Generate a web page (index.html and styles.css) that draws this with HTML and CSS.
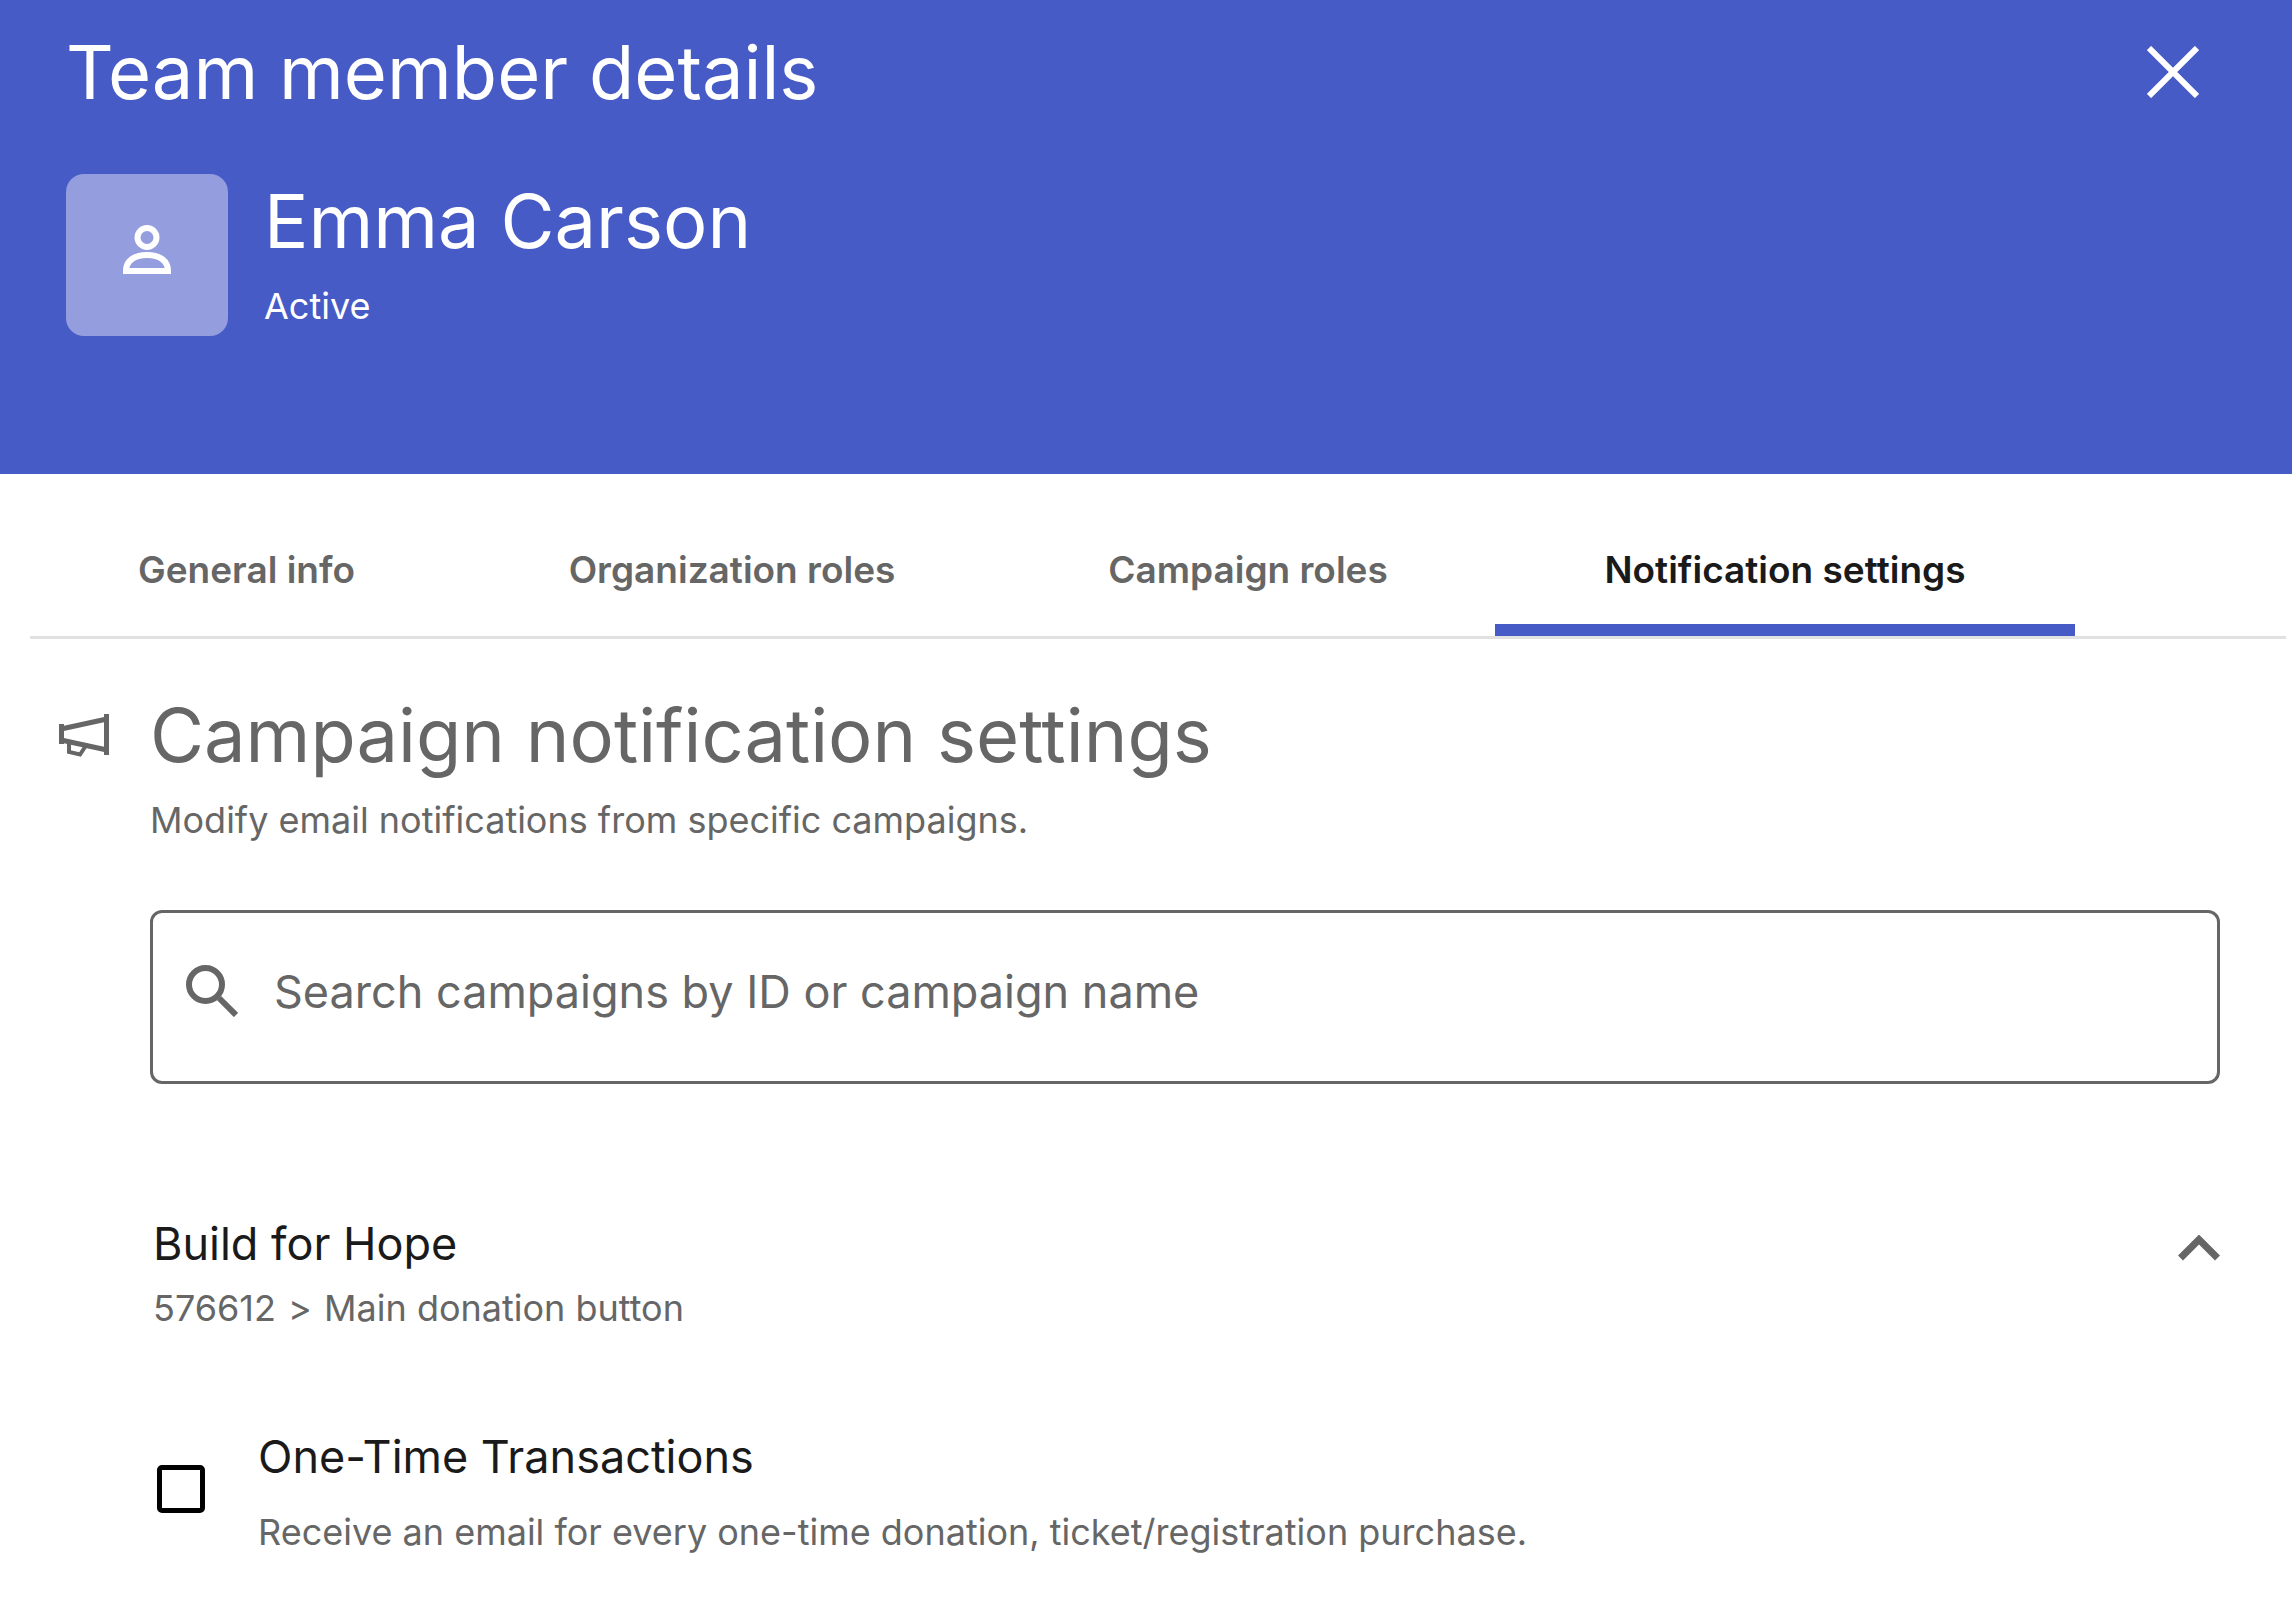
FILE: index.html
```html
<!DOCTYPE html>
<html lang="en">

<head>
  <meta charset="UTF-8">
  <meta name="viewport" content="width=device-width, initial-scale=1.0">
  <title>Team member details</title>
  <link rel="stylesheet" href="styles.css">
</head>

<body>
  <header class="header">
    <div class="header-top">
      <h1 class="title">Team member details</h1>
      <button type="button" class="close" aria-label="Close">
        <svg width="52" height="52" viewBox="0 0 52 52" fill="none" stroke="currentColor" stroke-width="6">
          <path d="M2 2l48 48M50 2L2 50" />
        </svg>
      </button>
    </div>
    <div class="profile">
      <div class="avatar">
        <svg width="48" height="50" viewBox="0 0 48 50" fill="none" stroke="currentColor" stroke-width="6">
          <circle cx="24" cy="12.5" r="9.5" />
          <path d="M3 46c0-10 8-16 21-16s21 6 21 16z" />
        </svg>
      </div>
      <div class="profile-text">
        <h2 class="title">Emma Carson</h2>
        <div class="status">Active</div>
      </div>
    </div>
  </header>

  <nav class="tabs">
    <button type="button" class="tab">General info</button>
    <button type="button" class="tab">Organization roles</button>
    <button type="button" class="tab">Campaign roles</button>
    <button type="button" class="tab active">Notification settings</button>
  </nav>

  <main class="settings">
    <svg class="megaphone" width="50" height="43" viewBox="0 0 50 43" fill="none" stroke="currentColor">
      <path d="M2.5 10v20M47.5 0v41" stroke-width="5" />
      <path d="M2 15L48 5M2 26l46 10" stroke-width="5" />
      <path d="M10 28v10l11 2.5 6-9" stroke-width="4" />
    </svg>
    <div class="settings-body">
      <h2 class="title">Campaign notification settings</h2>
      <p class="note">Modify email notifications from specific campaigns.</p>

      <label class="search">
        <svg width="52" height="52" viewBox="0 0 52 52" fill="none" stroke="currentColor" stroke-width="6">
          <circle cx="19.5" cy="19.5" r="16.5" />
          <path d="M33 33l17 17" />
        </svg>
        <input type="text" aria-label="Search campaigns" placeholder="Search campaigns by ID or campaign name">
      </label>

      <section class="campaign">
        <div class="campaign-head">
          <div>
            <h3 class="name">Build for Hope</h3>
            <div class="path">576612 <span class="arrow">&gt;</span> Main donation button</div>
          </div>
          <button type="button" class="toggle" aria-label="Collapse">
            <svg width="42" height="26" viewBox="0 0 42 26" fill="none" stroke="currentColor" stroke-width="7">
              <path d="M2.5 23L21 4.5 39.5 23" />
            </svg>
          </button>
        </div>
        <div class="option">
          <input type="checkbox" id="oneTime" class="checkbox">
          <label for="oneTime">
            <span class="name">One-Time Transactions</span>
            <span class="hint">Receive an email for every one-time donation, ticket/registration purchase.</span>
          </label>
        </div>
      </section>
    </div>
  </main>
</body>

</html>
```

FILE: styles.css
```css
* {
  box-sizing: border-box;
}

body {
  margin: 0;
  background-color: #fff;
  color: #666;
  font-family: Inter, 'Liberation Sans', sans-serif;
  font-size: 36px;
  line-height: 48px;
}

h1,
h2,
h3,
p {
  margin: 0;
  font-weight: normal;
}

button {
  border: none;
  padding: 0;
  background: none;
  color: inherit;
  font: inherit;
  cursor: pointer;
}

svg {
  display: block;
}

.title {
  font-size: 74px;
  line-height: 90px;
}

.header {
  padding: 27px 93px 138px 66px;
  background-color: #475bc7;
  color: #fff;
}

.header-top {
  display: flex;
  justify-content: space-between;
  align-items: center;
  margin-bottom: 57px;
}

.profile {
  display: flex;
  gap: 36px;
}

.avatar {
  width: 162px;
  height: 162px;
  border-radius: 18px;
  background-color: #949ddd;
  display: flex;
  justify-content: center;
  padding-top: 51px;
}

.profile-text {
  padding-top: 2px;
}

.status {
  margin-top: 16px;
}

.tabs {
  display: grid;
  /* last column stays empty */
  grid-template-columns: 433fr 538fr 494fr 580fr 211fr;
  margin: 0 6px 0 30px;
  border-bottom: 3px solid #e1e1e1;
}

.tab {
  padding: 72px 0 30px;
  border-bottom: 12px solid transparent;
  font-size: 37px;
  font-weight: 600;
}

.tab.active {
  color: #1a1a1a;
  border-color: #475bc7;
}

.settings {
  display: flex;
  gap: 41px;
  padding: 51px 72px 0 59px;
}

.megaphone {
  flex: none;
  margin-top: 24px;
}

.settings-body {
  flex: 1;
}

.note {
  margin-top: 16px;
}

.search {
  display: flex;
  align-items: center;
  gap: 36px;
  margin-top: 66px;
  padding: 48px 33px 60px;
  border: 3px solid #666;
  border-radius: 12px;
}

.search input {
  flex: 1;
  height: 60px;
  padding: 0;
  border: none;
  outline: none;
  background: none;
  color: inherit;
  font: inherit;
  font-size: 45px;
}

.search input::placeholder {
  color: #666;
  opacity: 1;
}

.campaign {
  margin-top: 130px;
  padding-left: 3px;
}

.campaign-head {
  display: flex;
  justify-content: space-between;
  align-items: flex-start;
}

.name {
  display: block;
  color: #1a1a1a;
  font-size: 45px;
  line-height: 60px;
}

.path {
  margin-top: 10px;
}

.arrow {
  margin: 0 2px;
}

.toggle {
  margin-top: 21px;
}

.option {
  display: flex;
  align-items: flex-start;
  gap: 53px;
  margin-top: 95px;
  padding-left: 4px;
}

.checkbox {
  appearance: none;
  width: 48px;
  height: 48px;
  margin: 38px 0 0;
  border: 5px solid #000;
  border-radius: 5px;
  background-color: #fff;
}

.checkbox:checked {
  background-color: #475bc7;
}

.hint {
  display: block;
  margin-top: 21px;
}
```
